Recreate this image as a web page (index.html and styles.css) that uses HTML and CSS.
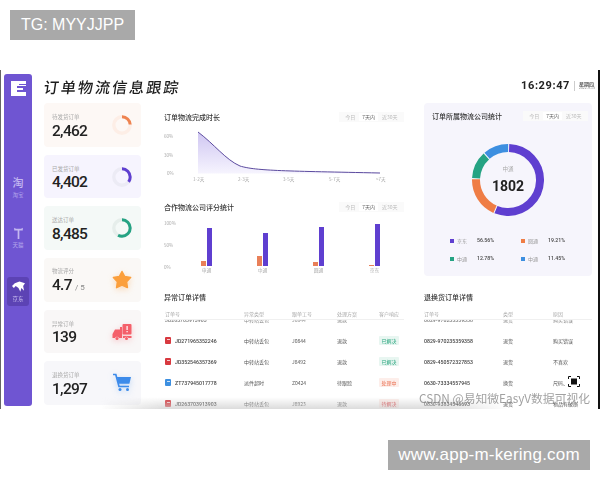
FILE: index.html
```html
<!DOCTYPE html>
<html lang="zh-CN">
<head>
  <meta charset="UTF-8" />
  <title>订单物流信息跟踪</title>
  <link rel="stylesheet" href="styles.css">
</head>
<body>
  <!-- overlay tags -->
  <div class="tag tag-top">TG: MYYJJPP</div>
  <div class="tag tag-bottom">www.app-m-kering.com</div>

  <div class="frame">
    <!-- sidebar -->
    <div class="side">
      <svg class="logo" viewBox="0 0 15 15">
        <path d="M0 0H15V3H8V4H15V5H6V7H12V9H6V11H15V15H0Z" fill="#fff"/>
      </svg>
      <div class="nav nav-first">
        <span class="nav-glyph">淘</span>
        <span class="nav-label">淘宝</span>
      </div>
      <div class="nav nav-second">
        <svg class="nav-icon" viewBox="0 0 12 14">
          <path d="M1 1V4H5V14H7V4H11V1L9 2H3Z" fill="#c4b8f0"/>
        </svg>
        <span class="nav-label">天猫</span>
      </div>
      <div class="nav nav-active">
        <svg class="nav-icon" viewBox="0 0 14 12">
          <path d="M0 5L3 2L8 0L14 2L12 5L13 10L10 7L9 11L7 7L4 5L2 7Z" fill="#fff"/>
        </svg>
        <span class="nav-label">京东</span>
      </div>
    </div>

    <div class="main">
      <!-- header -->
      <div class="head">
        <h1>订单物流信息跟踪</h1>
        <div class="clock">
          <span class="time">16:29:47</span>
          <div class="date">
            <span>星期四</span>
            <small>2022-9-15</small>
          </div>
        </div>
      </div>

      <div class="body">
        <!-- stat cards -->
        <div class="cards">
          <div class="card card-orange">
            <div><div class="card-label">待发货订单</div><div class="card-num">2,462</div></div>
            <svg class="card-icon" viewBox="0 0 20 20">
              <circle cx="10" cy="10" r="8.2" fill="none" stroke="#fdeee6" stroke-width="3.4"/>
              <circle cx="10" cy="10" r="8.2" fill="none" stroke="#ee8350" stroke-width="3" pathLength="100" stroke-dasharray="24 76" transform="rotate(-90 10 10)"/>
            </svg>
          </div>
          <div class="card card-purple">
            <div><div class="card-label">已发货订单</div><div class="card-num">4,402</div></div>
            <svg class="card-icon" viewBox="0 0 20 20">
              <circle cx="10" cy="10" r="8.2" fill="none" stroke="#ecebf5" stroke-width="3.4"/>
              <circle cx="10" cy="10" r="8.2" fill="none" stroke="#5f3fd0" stroke-width="3" pathLength="100" stroke-dasharray="35 65" transform="rotate(-90 10 10)"/>
            </svg>
          </div>
          <div class="card card-green">
            <div><div class="card-label">送达订单</div><div class="card-num">8,485</div></div>
            <svg class="card-icon" viewBox="0 0 20 20">
              <circle cx="10" cy="10" r="8.2" fill="none" stroke="#e6eeeb" stroke-width="3.4"/>
              <circle cx="10" cy="10" r="8.2" fill="none" stroke="#25a383" stroke-width="3" pathLength="100" stroke-dasharray="58 42" transform="rotate(-90 10 10)"/>
            </svg>
          </div>
          <div class="card card-sand">
            <div><div class="card-label">物流评分</div><div class="card-num">4.7 <small>/ 5</small></div></div>
            <svg class="card-icon glow-orange" viewBox="0 0 20 20">
              <path d="M10 1.5L12.7 6.5L18.6 7.6L14.6 11.8L15.4 17.6L10 15.1L4.6 17.6L5.4 11.8L1.4 7.6L7.3 6.5Z" fill="#fb9f3c" stroke="#fb9f3c" stroke-width="1.5" stroke-linejoin="round"/>
            </svg>
          </div>
          <div class="card card-grey">
            <div><div class="card-label">异常订单</div><div class="card-num">139</div></div>
            <svg class="card-icon glow-red" viewBox="0 0 20 20">
              <path d="M0.5 12L3 7.5H8V5H10V16H7A2.2 2.2 0 0 0 3 16H0.5Z" fill="#f4606a"/>
              <path d="M11 14H19.5V16H16.5A2.2 2.2 0 0 0 12.5 16H11Z" fill="#f4606a"/>
              <rect x="10.5" y="2" width="9" height="10.5" rx="1" fill="#f4606a"/>
              <rect x="14.5" y="4" width="1.2" height="4" fill="#fff"/>
              <rect x="14.5" y="9" width="1.2" height="1.3" fill="#fff"/>
              <circle cx="5" cy="16.5" r="1.5" fill="#f4606a"/>
              <circle cx="14.5" cy="16.5" r="1.5" fill="#f4606a"/>
            </svg>
          </div>
          <div class="card card-blue">
            <div><div class="card-label">退换货订单</div><div class="card-num">1,297</div></div>
            <svg class="card-icon glow-blue" viewBox="0 0 20 20">
              <path d="M1 1.5H3.8L7 13.5H17" fill="none" stroke="#3d8bea" stroke-width="1.7"/>
              <path d="M4.8 4H19L17.4 10.8H6.5Z" fill="#3d8bea"/>
              <circle cx="8" cy="16.5" r="1.5" fill="#3d8bea"/>
              <circle cx="15.5" cy="16.5" r="1.5" fill="#3d8bea"/>
            </svg>
          </div>
        </div>

        <div class="content">
          <div class="top">
            <div class="charts">
              <div class="title-row">
                <h2>订单物流完成时长</h2>
                <div class="tabs"><span>今日</span><span class="on">7天内</span><span>近30天</span></div>
              </div>
              <svg class="line-chart" viewBox="0 0 240 80">
                <defs>
                  <linearGradient id="fade" x1="0" y1="0" x2="0" y2="1">
                    <stop offset="0" stop-color="#cfc6f2"/>
                    <stop offset="1" stop-color="#f6f4fe"/>
                  </linearGradient>
                </defs>
                <path d="M34 10C50 22 62 38 76 44C92 49 124 49 216 51V51.5H34Z" fill="url(#fade)"/>
                <path d="M34 10C50 22 62 38 76 44C92 49 124 49 216 51" fill="none" stroke="#5b4a9e" stroke-width="1"/>
                <text x="0" y="16">60%</text>
                <text x="0" y="35">30%</text>
                <text x="3" y="53">0%</text>
                <text x="29" y="59">1-2天</text>
                <text x="74" y="59">2-3天</text>
                <text x="119" y="59">3-5天</text>
                <text x="165" y="59">5-7天</text>
                <text x="212" y="59">&gt;7天</text>
              </svg>

              <div class="title-row">
                <h2>合作物流公司评分统计</h2>
                <div class="tabs"><span>今日</span><span class="on">7天内</span><span>近30天</span></div>
              </div>
              <div class="bar-chart">
                <div class="y-axis"><span>100%</span><span>50%</span><span>0%</span></div>
                <div class="group">
                  <div class="bars"><i class="bar-o" style="height:5px"></i><i class="bar-p" style="height:38px"></i></div>
                  <span>申通</span>
                </div>
                <div class="group">
                  <div class="bars"><i class="bar-o" style="height:10px"></i><i class="bar-p" style="height:33px"></i></div>
                  <span>中通</span>
                </div>
                <div class="group">
                  <div class="bars"><i class="bar-o" style="height:4px"></i><i class="bar-p" style="height:39px"></i></div>
                  <span>圆通</span>
                </div>
                <div class="group">
                  <div class="bars"><i class="bar-o" style="height:1px"></i><i class="bar-p" style="height:42px"></i></div>
                  <span>京东</span>
                </div>
              </div>
            </div>

            <!-- share of orders -->
            <div class="share">
              <div class="title-row">
                <h2>订单所属物流公司统计</h2>
                <div class="tabs"><span>今日</span><span class="on">7天内</span><span>近30天</span></div>
              </div>
              <div class="donut">
                <svg viewBox="0 0 72 72">
                  <g fill="none" stroke-width="8" transform="rotate(-88 36 36)">
                    <circle cx="36" cy="36" r="32" stroke="#5f3fd0" pathLength="100" stroke-dasharray="55.6 44.4"/>
                    <circle cx="36" cy="36" r="32" stroke="#ef7d45" pathLength="100" stroke-dasharray="18.7 81.3" stroke-dashoffset="-56.1"/>
                    <circle cx="36" cy="36" r="32" stroke="#25a383" pathLength="100" stroke-dasharray="12.3 87.7" stroke-dashoffset="-75.3"/>
                    <circle cx="36" cy="36" r="32" stroke="#3d8fe0" pathLength="100" stroke-dasharray="11.4 88.6" stroke-dashoffset="-88.1"/>
                  </g>
                </svg>
                <div class="donut-text"><span>中通</span><b>1802</b></div>
              </div>
              <div class="legend">
                <div><i class="sq-p"></i><span>京东</span><b>56.56%</b></div>
                <div><i class="sq-o"></i><span>圆通</span><b>19.21%</b></div>
                <div><i class="sq-g"></i><span>中通</span><b>12.78%</b></div>
                <div><i class="sq-b"></i><span>中通</span><b>11.45%</b></div>
              </div>
            </div>
          </div>

          <!-- tables -->
          <div class="tables">
            <div class="tbl">
              <h2>异常订单详情</h2>
              <div class="row row-head cols-a"><span>订单号</span><span>异常类型</span><span>跟单工号</span><span>处理方案</span><span>客户响应</span></div>
              <div class="rows">
                <div class="row cols-a row-clip"><span class="id">JD263703913903</span><span>中转站丢包</span><span>J0844</span><span>退款</span><span></span></div>
                <div class="row cols-a"><span class="id"><i class="red"></i>JD271965352246</span><span>中转站丢包</span><span>J0844</span><span>退款</span><span><em class="ok">已解决</em></span></div>
                <div class="row cols-a"><span class="id"><i class="red"></i>JD352546357369</span><span>中转站丢包</span><span>J8492</span><span>退款</span><span><em class="ok">已解决</em></span></div>
                <div class="row cols-a"><span class="id"><i class="blue"></i>ZT737945017778</span><span>派件超时</span><span>Z0424</span><span>待跟踪</span><span><em class="doing">处理中</em></span></div>
                <div class="row cols-a"><span class="id"><i class="red"></i>JD263703913903</span><span>中转站丢包</span><span>J8923</span><span>退款</span><span><em class="todo">待解决</em></span></div>
              </div>
            </div>
            <div class="tbl">
              <h2>退换货订单详情</h2>
              <div class="row row-head cols-b"><span>订单号</span><span>类型</span><span>原因</span></div>
              <div class="rows">
                <div class="row cols-b row-clip"><span class="id">0829-970235359358</span><span>退货</span><span>购买错误</span></div>
                <div class="row cols-b"><span class="id">0829-970235359358</span><span>退货</span><span>购买错误</span></div>
                <div class="row cols-b"><span class="id">0829-450572327853</span><span>退货</span><span>不喜欢</span></div>
                <div class="row cols-b"><span class="id">0630-73334557945</span><span>换货</span><span>尺码、</span></div>
                <div class="row cols-b"><span class="id">0830-93834545693</span><span>退货</span><span>物品有破损</span></div>
              </div>
            </div>
          </div>
        </div>
      </div>
    </div>

    <!-- things lying over the table -->
    <div class="bottom-fade"></div>
    <svg class="full-icon" viewBox="0 0 12 11">
      <rect x="3" y="2.5" width="6" height="6" fill="#111"/>
      <path d="M0.5 3V0.5H3M9 0.5H11.5V3M11.5 8V10.5H9M3 10.5H0.5V8" fill="none" stroke="#111"/>
    </svg>
  </div>
  <div class="mark">CSDN @易知微EasyV数据可视化</div>
</body>
</html>
```

FILE: styles.css
```css
body {
  margin: 0;
  width: 600px;
  height: 480px;
  overflow: hidden;
  position: relative;
  background: #fff;
  color: #333;
  font-family: "Noto Sans CJK SC", "Noto Sans", sans-serif;
}

/* grey tags on top of the picture */
.tag {
  position: absolute;
  z-index: 5;
  background: #a9a9a9;
  color: #fff;
  height: 30px;
  line-height: 30px;
  font-family: "Liberation Sans", sans-serif;
  font-size: 16px;
  text-align: center;
}
.tag-top {
  left: 10px;
  top: 10px;
  width: 125px;
}
.tag-bottom {
  left: 388px;
  top: 440px;
  width: 202px;
  font-size: 17px;
  letter-spacing: 0.2px;
}

.frame {
  position: absolute;
  left: 0;
  top: 70px;
  width: 600px;
  height: 339px;
  box-sizing: border-box;
  display: flex;
  overflow: hidden;
  border-left: 1px solid #666;
  border-right: 2px solid #111;
  filter: blur(0.3px);
}

/* sidebar */
.side {
  width: 28px;
  margin: 4px 0 3px 3px;
  flex: none;
  background: #6f55d2;
  border-radius: 3px;
  display: flex;
  flex-direction: column;
  align-items: center;
}
.logo {
  width: 15px;
  height: 15px;
  margin-top: 7px;
}
.nav {
  width: 22px;
  display: flex;
  flex-direction: column;
  align-items: center;
  color: #b5a7ec;
  border-radius: 3px;
}
.nav-first {
  margin-top: 80px;
}
.nav-second {
  margin-top: 28px;
}
.nav-active {
  margin-top: 28px;
  height: 29px;
  background: #5c43b4;
  color: #cfc5f3;
  padding-top: 4px;
  box-sizing: border-box;
}
.nav-glyph {
  font-size: 11px;
  line-height: 13px;
  font-weight: 500;
  color: #c4b8f0;
}
.nav-icon {
  width: 13px;
  height: 12px;
}
.nav-label {
  font-size: 5.5px;
  line-height: 8px;
  margin-top: 2px;
}

.main {
  flex: 1;
  min-width: 0;
  padding-left: 12px;
}

/* header */
.head {
  height: 33px;
  display: flex;
  justify-content: space-between;
  align-items: center;
  padding-right: 3px;
}
h1 {
  margin: 0;
  font-size: 15px;
  font-weight: 500;
  letter-spacing: 2.1px;
  color: #1c1c1c;
  transform: skewX(-8deg);
}
.clock {
  display: flex;
  align-items: center;
  margin-top: -2px;
}
.time {
  font-family: Roboto, sans-serif;
  font-size: 11px;
  font-weight: 700;
  letter-spacing: 0.6px;
  color: #222;
  padding-right: 4px;
  border-right: 1px solid #ccc;
  line-height: 10px;
}
.date {
  display: flex;
  flex-direction: column;
  margin-left: 4px;
  font-size: 5px;
  line-height: 5px;
  font-weight: 500;
  color: #444;
}
.date small {
  font-size: 3.5px;
  line-height: 4px;
  font-weight: 400;
  color: #888;
}

.body {
  display: flex;
}

/* stat cards */
.cards {
  width: 97px;
  height: 302px;
  flex: none;
  display: flex;
  flex-direction: column;
  gap: 8px;
}
.card {
  flex: 1;
  display: flex;
  justify-content: space-between;
  align-items: center;
  padding: 3px 9px 0 8px;
  border-radius: 4px;
}
.card-orange { background: #fdf8f5; }
.card-purple { background: #f6f4fe; }
.card-green { background: #f4f9f7; }
.card-sand { background: #faf8f6; }
.card-grey { background: #f9f7f7; }
.card-blue { background: #f7f7fa; }
.card-label {
  font-size: 5.5px;
  line-height: 8px;
  margin-bottom: 1.5px;
  color: #aaa;
}
.card-num {
  font-family: Roboto, sans-serif;
  font-size: 15.5px;
  line-height: 17px;
  font-weight: 500;
  letter-spacing: -0.7px;
  color: #222;
}
.card-num small {
  font-size: 8px;
  font-weight: 400;
  letter-spacing: 0;
  color: #888;
}
.card-icon {
  width: 20px;
  height: 20px;
  margin-top: -3px;
}
.glow-orange { filter: drop-shadow(0 2px 3px rgba(251, 159, 60, 0.35)); }
.glow-red { filter: drop-shadow(0 2px 3px rgba(244, 96, 106, 0.3)); }
.glow-blue { filter: drop-shadow(0 2px 3px rgba(61, 139, 234, 0.3)); }

.content {
  flex: 1;
  min-width: 0;
  margin-left: 23px;
}
.top {
  display: flex;
  gap: 20px;
}
.charts {
  width: 240px;
  flex: none;
  padding-top: 9px;
}

/* titles and day tabs */
.title-row {
  height: 10px;
  display: flex;
  justify-content: space-between;
  align-items: center;
}
h2 {
  margin: 0;
  font-size: 7px;
  line-height: 10px;
  font-weight: 500;
  color: #333;
}
.tabs {
  display: flex;
  align-items: center;
  height: 10px;
  padding: 0 3px;
  background: #fafafa;
  font-size: 5px;
  color: #bbb;
}
.tabs span {
  padding: 0 3.5px;
  line-height: 8px;
}
.tabs .on {
  background: #fff;
  color: #666;
}

/* line chart */
.line-chart {
  display: block;
  width: 240px;
  height: 80px;
}
.line-chart text {
  font-size: 4.6px;
  fill: #aaa;
}

/* bar chart */
.bar-chart {
  display: flex;
  margin-top: 6px;
  height: 57px;
}
.y-axis {
  width: 14.5px;
  height: 50px;
  margin-top: 1.5px;
  display: flex;
  flex-direction: column;
  justify-content: space-between;
  font-size: 4.6px;
  line-height: 6px;
  color: #aaa;
}
.group {
  width: 56px;
  display: flex;
  flex-direction: column;
  align-items: center;
  font-size: 4.8px;
  line-height: 8px;
  color: #aaa;
}
.bars {
  height: 48px;
  display: flex;
  align-items: flex-end;
  gap: 1px;
}
.bars i {
  width: 5px;
  display: block;
}
.bar-o { background: #e98059; }
.bar-p { background: #5f3fd0; }

/* company share card */
.share {
  width: 168px;
  height: 173px;
  flex: none;
  padding: 8px 4px 0 8px;
  box-sizing: border-box;
  background: #f6f5fc;
  border-radius: 4px;
}
.donut {
  position: relative;
  width: 72px;
  height: 72px;
  margin: 23px 0 0 40px;
}
.donut svg {
  display: block;
  width: 72px;
  height: 72px;
}
.donut-text {
  position: absolute;
  inset: 0;
  display: flex;
  flex-direction: column;
  align-items: center;
  justify-content: center;
  font-size: 5.5px;
  line-height: 8px;
  color: #aaa;
}
.donut-text b {
  font-family: Roboto, sans-serif;
  font-size: 14px;
  line-height: 18px;
  margin-top: 4px;
  font-weight: 700;
  color: #222;
}
.legend {
  display: grid;
  grid-template-columns: 71px 60px;
  row-gap: 9px;
  margin: 20px 0 0 18px;
  font-size: 5px;
  line-height: 9px;
  color: #999;
}
.legend div {
  display: flex;
  align-items: center;
}
.legend i {
  width: 4px;
  height: 4px;
  margin-right: 3px;
}
.legend span {
  width: 20px;
}
.legend b {
  font-family: Roboto, sans-serif;
  font-weight: 500;
  font-size: 5.2px;
  color: #444;
}
.sq-p { background: #5f3fd0; }
.sq-o { background: #ef7d45; }
.sq-g { background: #25a383; }
.sq-b { background: #3d8fe0; }

/* tables */
.tables {
  display: flex;
  gap: 20px;
  margin-top: 16px;
}
.tbl {
  flex: none;
  width: 240px;
}
.tbl + .tbl {
  width: 168px;
}
.row {
  display: grid;
  align-items: center;
  height: 21px;
  font-size: 5px;
  color: #555;
}
.cols-a {
  grid-template-columns: 79px 48px 45px 42px 25px;
  padding-left: 1px;
}
.cols-b { grid-template-columns: 79px 50px 39px; }
.row-head {
  height: 11px;
  margin-top: 6px;
  color: #aaa;
  border-bottom: 1px solid #f0f0f0;
}
.rows {
  height: 100px;
  overflow: hidden;
}
.row-clip {
  margin-top: -11px;
  opacity: 0.7;
}
.id {
  display: flex;
  align-items: center;
  font-family: Roboto, sans-serif;
  font-size: 5.2px;
  font-weight: 500;
  color: #444;
}
.id i {
  position: relative;
  width: 6px;
  height: 6.5px;
  margin-right: 4px;
  border-radius: 1px;
}
/* small white mark inside the row icon */
.id i::after {
  content: "";
  position: absolute;
  left: 1.5px;
  top: 1.5px;
  width: 3px;
  height: 1.5px;
  background: rgba(255, 255, 255, 0.75);
}
.id .red { background: #d8393f; }
.id .blue { background: #3d8fe0; }
.row em {
  font-style: normal;
  padding: 1px 2.5px;
  border-radius: 1px;
}
.ok { background: #e8f6f1; color: #2aa57f; }
.doing { background: #fdeeea; color: #ea7355; }
.todo { background: #fdeeea; color: #d8393f; }

/* overlays */
.bottom-fade {
  position: absolute;
  left: 100px;
  right: 90px;
  bottom: 0;
  height: 12px;
  background: linear-gradient(to bottom, rgba(215, 215, 215, 0), rgba(205, 205, 205, 0.7));
  -webkit-mask-image: linear-gradient(to right, transparent, #000 15%, #000 85%, transparent);
  mask-image: linear-gradient(to right, transparent, #000 15%, #000 85%, transparent);
}
.full-icon {
  position: absolute;
  left: 567px;
  top: 306px;
  width: 12px;
  height: 11px;
}
.mark {
  position: absolute;
  z-index: 4;
  left: 419px;
  top: 389px;
  font-size: 11.8px;
  line-height: 18px;
  color: rgba(110, 110, 110, 0.65);
  white-space: nowrap;
}
```
